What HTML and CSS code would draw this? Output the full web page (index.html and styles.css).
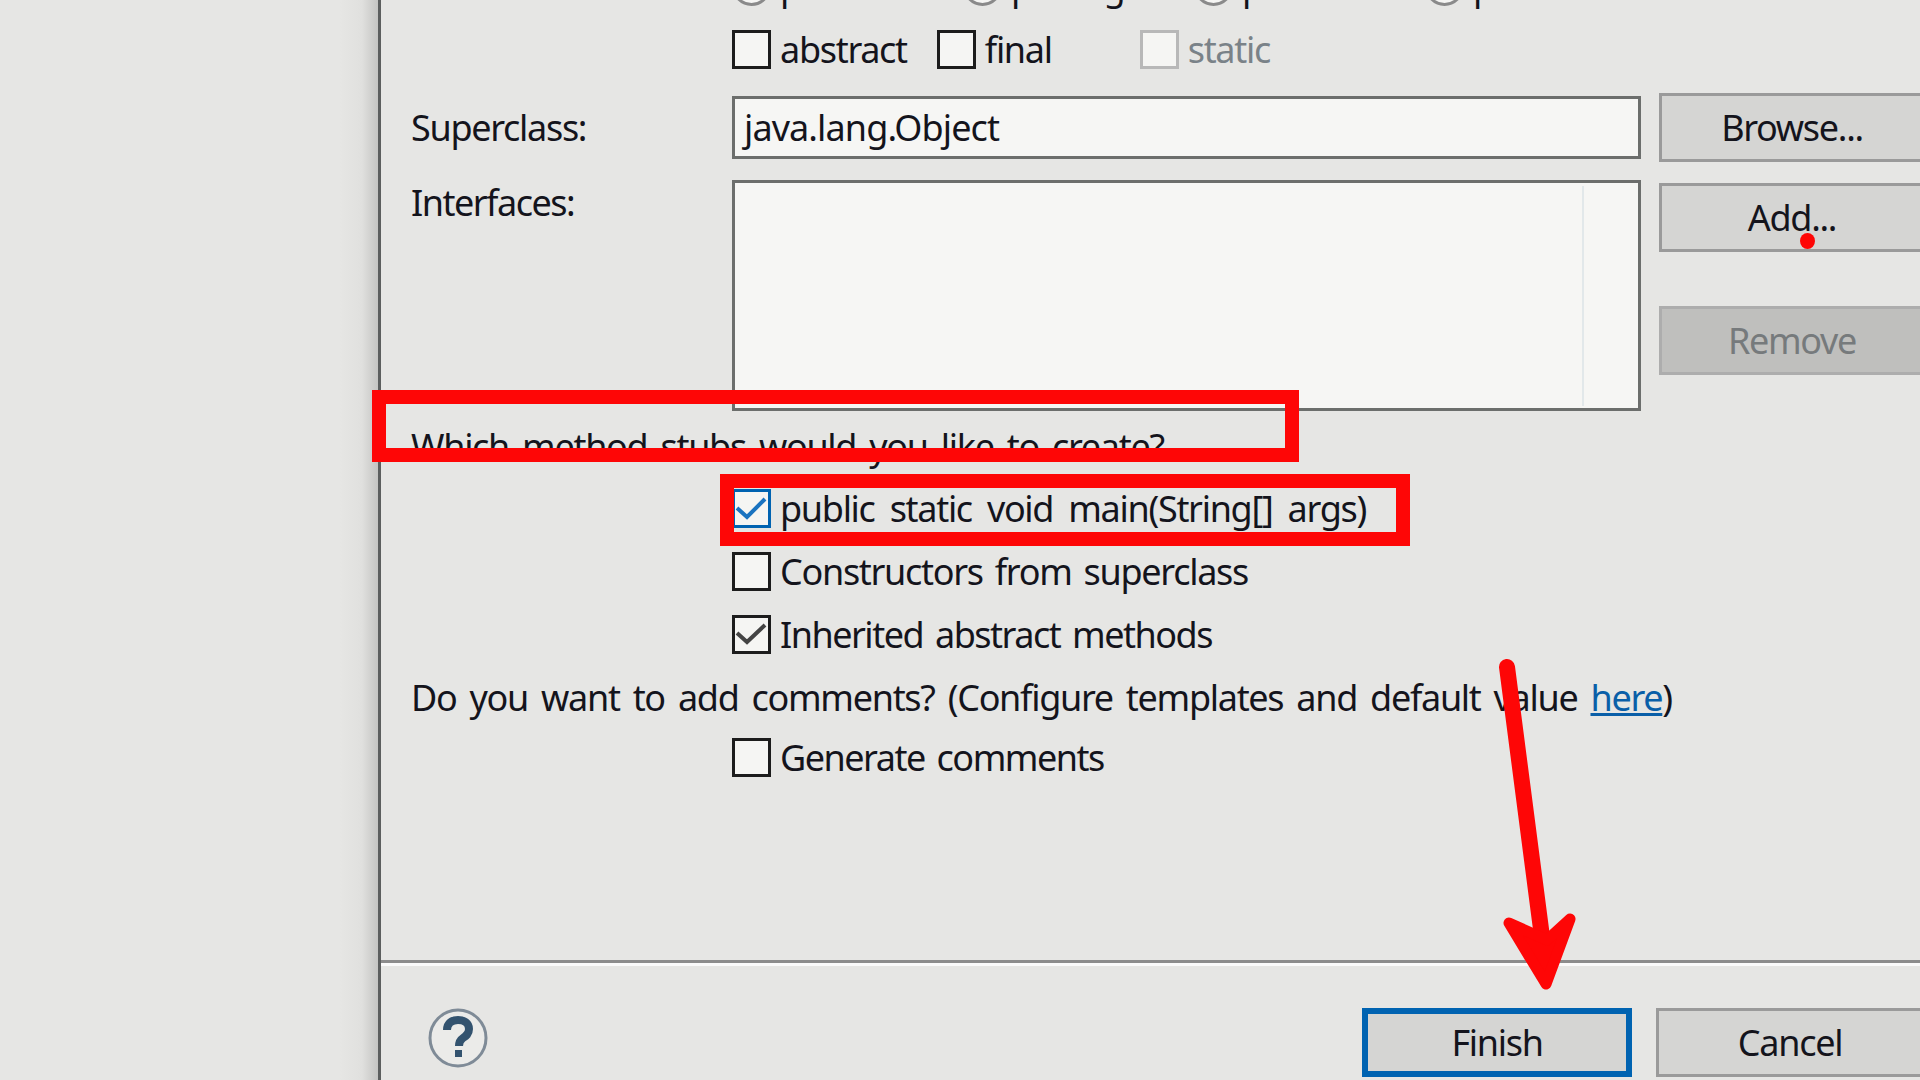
FILE: index.html
```html
<!DOCTYPE html>
<html lang="en">
<head>
    <meta charset="UTF-8">
    <title>New Java Class</title>
    <link rel="stylesheet" href="styles.css">
</head>
<body>
    <!-- Window behind the dialog -->
    <div class="gutter"></div>

    <div class="dialog">
        <div class="form">
            <!-- Modifiers, top row is cut off by the screen edge -->
            <div class="options radios">
                <label class="option radio-item"><span class="radio"></span>public</label>
                <label class="option radio-item"><span class="radio"></span>package</label>
                <label class="option radio-item"><span class="radio"></span>private</label>
                <label class="option radio-item"><span class="radio"></span>protected</label>
            </div>
            <div class="options modifiers">
                <label class="option mod-abstract"><span class="check"></span>abstract</label>
                <label class="option mod-final"><span class="check"></span>final</label>
                <label class="option disabled"><span class="check"></span>static</label>
            </div>

            <div class="row row-super">
                <span class="label">Superclass:</span>
                <div class="field">java.lang.Object</div>
                <button class="btn" type="button">Browse...</button>
            </div>

            <div class="row row-interfaces">
                <span class="label tight">Interfaces:</span>
                <div class="field list"><div class="list-rule"></div></div>
                <div class="side-buttons">
                    <button class="btn" type="button">Add...</button>
                    <button class="btn btn-off" type="button">Remove</button>
                </div>
            </div>

            <p class="question q-stubs">Which method stubs would you like to create?</p>
            <div class="options stack">
                <label class="option focused">
                    <span class="check">
                        <svg viewBox="0 0 33 33"><path d="M2 16l10 9 18-18"/></svg>
                    </span>public static void main(String[] args)
                </label>
                <label class="option"><span class="check"></span>Constructors from superclass</label>
                <label class="option tight">
                    <span class="check">
                        <svg viewBox="0 0 33 33"><path d="M2 15l10 9 18-17"/></svg>
                    </span>Inherited abstract methods
                </label>
            </div>

            <p class="question q-comments">Do you want to add comments? (Configure templates and default value <a href="#">here</a>)</p>
            <div class="options stack-comments">
                <label class="option tight"><span class="check"></span>Generate comments</label>
            </div>
        </div>

        <div class="footer">
            <svg class="help" viewBox="0 0 60 60">
                <circle class="help-ring" cx="30" cy="30" r="28"/>
                <path class="help-mark" d="M19 22c0-7 5-10 11-10s11 3 11 9c0 5-3 7-6 9-3 2-4 4-4 8"/>
                <rect class="help-dot" x="27" y="42" width="7" height="7"/>
            </svg>
            <button class="btn btn-default" type="button">Finish</button>
            <button class="btn btn-cancel" type="button">Cancel</button>
        </div>
    </div>

    <!-- Red marks drawn over the screenshot -->
    <div class="mark mark-stubs"></div>
    <div class="mark mark-main"></div>
    <div class="dot"></div>
    <svg class="arrow" viewBox="0 0 1920 1080">
        <path class="arrow-shaft" d="M1507 667L1545 960"/>
        <path class="arrow-head" d="M1509 923L1547 940L1570 919L1546 984Z"/>
    </svg>
</body>
</html>
```

FILE: styles.css
```css
/* General page */
html, body {
    height: 100%;
}
body {
    margin: 0;
    display: flex;
    height: 1080px;
    overflow: hidden;
    background-color: #e6e6e4;
    color: #14141c;
    font-family: "Noto Sans", sans-serif;
    font-size: 36px;
    letter-spacing: -1.3px;
    word-spacing: 4px;
}
.tight {
    letter-spacing: -1.5px;
}
.gutter {
    flex: none;
    width: 378px;
    background: linear-gradient(to right, #e6e6e4 340px, #e0e0de 362px, #c4c4c2 378px);
}

/* Dialog */
.dialog {
    flex: none;
    width: 1547px;
    border-left: 3px solid #5c5e5e;
    display: flex;
    flex-direction: column;
}
.form {
    height: 960px;
    padding-left: 30px;
    box-sizing: border-box;
    flex: none;
}

/* Checkboxes and radios */
.options {
    margin-left: 321px;
    display: flex;
}
.option {
    display: flex;
    align-items: center;
    height: 39px;
    white-space: nowrap;
}
.check {
    flex: none;
    width: 39px;
    height: 39px;
    box-sizing: border-box;
    margin-right: 9px;
    border: 3px solid #1c1c1c;
    background-color: #f5f5f3;
}
.check svg {
    display: block;
    fill: none;
    stroke: #444;
    stroke-width: 4;
}
.radio {
    flex: none;
    width: 39px;
    height: 39px;
    box-sizing: border-box;
    margin-right: 9px;
    border: 3px solid #8a8a8a;
    border-radius: 50%;
    background-color: #f5f5f3;
}
.radios {
    margin-top: -33px;
}
.radio-item {
    width: 231px;
}
.modifiers {
    margin-top: 24px;
}
.mod-abstract {
    margin-right: 30px;
}
.mod-final {
    margin-right: 88px;
}
.disabled {
    color: #7a8288;
}
.disabled .check {
    border-color: #b8b8b8;
}
.focused {
    word-spacing: 7px;
}
.focused .check {
    border-color: #0063b1;
}
.focused .check svg {
    stroke: #1a73c0;
}

/* Field rows */
.row {
    display: flex;
    align-items: flex-start;
}
.label {
    flex: none;
    width: 321px;
}
.field {
    flex: none;
    width: 909px;
    box-sizing: border-box;
    margin-right: 18px;
    padding-left: 9px;
    border: 3px solid #6c6e6c;
    background-color: #f6f6f4;
    letter-spacing: -0.9px;
}
.row-super {
    margin-top: 24px;
}
.row-super .label {
    line-height: 69px;
}
.row-super .field {
    height: 63px;
    margin-top: 3px;
    line-height: 57px;
}
.row-interfaces {
    margin-top: 18px;
    height: 230px;
}
.row-interfaces .label {
    line-height: 46px;
}
.list {
    height: 231px;
    display: flex;
    justify-content: flex-end;
    padding: 3px 54px 2px 0;
}
.list-rule {
    width: 2px;
    background-color: #e2e8ea;
}
.side-buttons {
    display: flex;
    flex-direction: column;
    gap: 54px;
    padding-top: 3px;
}

/* Buttons */
.btn {
    flex: none;
    width: 266px;
    height: 69px;
    padding: 0;
    box-sizing: border-box;
    border: 3px solid #9a9a9a;
    background-color: #d5d5d3;
    color: #14141c;
    font: inherit;
    letter-spacing: inherit;
}
.btn-off {
    background-color: #bfbfbd;
    border-color: #adadad;
    color: #767a7c;
}

/* Method stubs and comments */
.question {
    margin: 0;
    line-height: 50px;
}
.q-stubs {
    margin-top: 12px;
    word-spacing: 5px;
}
.stack {
    margin-top: 17px;
    flex-direction: column;
    gap: 24px;
}
.q-comments {
    margin-top: 19px;
    word-spacing: 5px;
}
.q-comments a {
    color: #0a5fa8;
    text-decoration-thickness: 3px;
}
.stack-comments {
    margin-top: 15px;
}

/* Footer */
.footer {
    flex: none;
    display: flex;
    align-items: flex-start;
    border-top: 3px solid #8c8c8c;
    box-shadow: inset 0 3px 0 #fafafa;
    height: 117px;
    padding: 45px 0 0 47px;
}
.help {
    flex: none;
    width: 60px;
    height: 60px;
}
.help-ring {
    fill: #ebebe9;
    stroke: #7f8b97;
    stroke-width: 3;
}
.help-mark {
    fill: none;
    stroke: #33536f;
    stroke-width: 8;
}
.help-dot {
    fill: #33536f;
}
.btn-default {
    width: 270px;
    margin-left: 874px;
    border: 6px solid #0063b1;
}
.btn-cancel {
    width: 268px;
    margin-left: 24px;
}

/* Red annotations */
.mark {
    position: absolute;
    box-sizing: border-box;
    border: 14px solid #fe0606;
}
.mark-stubs {
    left: 372px;
    top: 390px;
    width: 927px;
    height: 72px;
}
.mark-main {
    left: 720px;
    top: 474px;
    width: 690px;
    height: 72px;
}
.dot {
    position: absolute;
    left: 1800px;
    top: 233px;
    width: 15px;
    height: 16px;
    border-radius: 50%;
    background-color: #fe0606;
}
.arrow {
    position: absolute;
    left: 0;
    top: 0;
    width: 1920px;
    height: 1080px;
    pointer-events: none;
}
.arrow-shaft {
    fill: none;
    stroke: #fe0606;
    stroke-width: 16;
    stroke-linecap: round;
}
.arrow-head {
    fill: #fe0606;
    stroke: #fe0606;
    stroke-width: 11;
    stroke-linejoin: round;
}
```
